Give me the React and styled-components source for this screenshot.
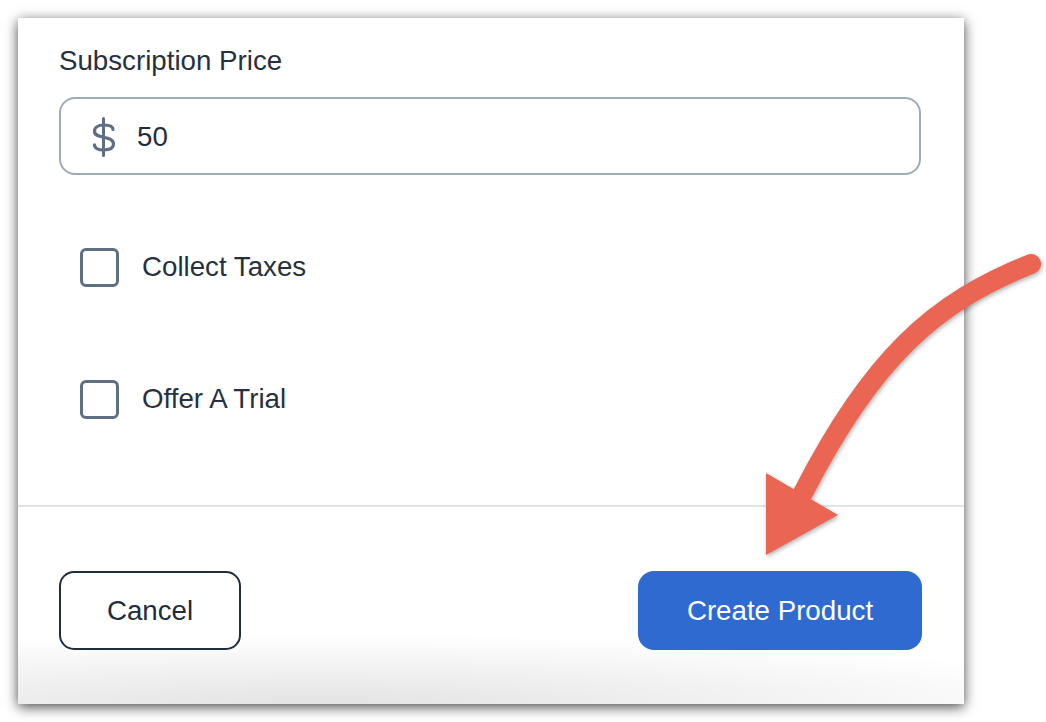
import styled, { createGlobalStyle } from 'styled-components';

const GlobalStyle = createGlobalStyle`
  html, body {
    margin: 0;
    padding: 0;
    background: #ffffff;
  }

  body {
    font-family: "Liberation Sans", Arial, Helvetica, sans-serif;
    color: #1f2d3d;
  }
`;

const options = ['Collect Taxes', 'Offer A Trial'];

const DollarIcon = () => (
  <svg width="24" height="40" viewBox="0 0 24 40" fill="none">
    <line x1="11.5" y1="1.5" x2="11.5" y2="38.5" stroke="#5e6f82" strokeWidth="3" strokeLinecap="round"/>
    <path
      d="M21 12.5 C21 9.5 17.5 8 12 8 C6 8 2.5 10.5 2.5 14.2 C2.5 18.2 6.5 19.2 11.5 20.2 C17 21.2 21.5 22.5 21.5 27 C21.5 31 17.5 33 11.5 33 C6 33 2.5 31 2.5 27.8"
      stroke="#5e6f82"
      strokeWidth="3.2"
      strokeLinecap="round"
      strokeLinejoin="round"
    />
  </svg>
);

const Arrow = () => (
  <ArrowLayer width="1046" height="722" viewBox="0 0 1046 722">
    <path
      d="M1031 264 C935 302, 872 358, 803 493"
      stroke="#eb6553"
      strokeWidth="20"
      strokeLinecap="round"
      fill="none"
    />
    <polygon points="766,473 838,515 766,555" fill="#eb6553"/>
  </ArrowLayer>
);

const App = () => {
  return (
    <Page>
      <GlobalStyle/>
      <Panel>
        <Body>
          <Label>Subscription Price</Label>
          <PriceField>
            <DollarIcon/>
            <PriceValue>50</PriceValue>
          </PriceField>
          <OptionList>
            {options.map((item) => (
              <OptionRow key={item}>
                <Checkbox/>
                <OptionText>{item}</OptionText>
              </OptionRow>
            ))}
          </OptionList>
        </Body>
        <Footer>
          <Button>Cancel</Button>
          <Button primary>Create Product</Button>
        </Footer>
      </Panel>
      <Arrow/>
    </Page>
  );
};

const Page = styled.div`
  position: relative;
  width: 1046px;
  height: 722px;
  padding: 18px 0 0 18px;
  box-sizing: border-box;
  overflow: hidden;
`;

const Panel = styled.div`
  width: 946px;
  height: 686px;
  background: #ffffff;
  box-shadow: 0 3px 12px rgba(0, 0, 0, 0.72);
  display: flex;
  flex-direction: column;
`;

const Body = styled.div`
  padding: 26px 43px 40px 41px;
  border-bottom: 2px solid #e1e5ea;
`;

const Label = styled.div`
  font-size: 27.7px;
  line-height: 33px;
  color: #26313f;
`;

const PriceField = styled.div`
  margin-top: 20px;
  height: 78px;
  box-sizing: border-box;
  border: 2px solid #9eabba;
  border-radius: 16px;
  display: flex;
  align-items: center;
  gap: 21px;
  padding-left: 31px;
  padding-top: 1px;
`;

const PriceValue = styled.span`
  font-size: 27.7px;
  color: #1f2d3d;
`;

const OptionList = styled.div`
  margin-top: 26px;
  display: flex;
  flex-direction: column;
`;

const OptionRow = styled.label`
  height: 132px;
  display: flex;
  align-items: center;
  gap: 23px;
  padding-left: 21px;
`;

const Checkbox = styled.span`
  width: 39px;
  height: 39px;
  box-sizing: border-box;
  border: 3px solid #5e6f82;
  border-radius: 6px;
`;

const OptionText = styled.span`
  font-size: 27.7px;
  color: #26313f;
`;

const Footer = styled.div`
  flex: 1;
  display: flex;
  justify-content: space-between;
  align-items: flex-start;
  padding: 64px 42px 0 41px;
  background: radial-gradient(ellipse 820px 70px at 300px 100%, rgba(0, 0, 0, 0.11), rgba(0, 0, 0, 0) 100%);
`;

const Button = styled.button`
  height: 79px;
  width: ${(p) => (p.primary ? '284px' : '182px')};
  box-sizing: border-box;
  border-radius: ${(p) => (p.primary ? '16px' : '15px')};
  border: ${(p) => (p.primary ? 'none' : '2px solid #1f2d3d')};
  background: ${(p) => (p.primary ? '#2f6ad1' : '#ffffff')};
  color: ${(p) => (p.primary ? '#ffffff' : '#1f2d3d')};
  font-family: "Liberation Sans", Arial, Helvetica, sans-serif;
  font-size: 27.7px;
  padding: 0;
`;

const ArrowLayer = styled.svg`
  position: absolute;
  top: 0;
  left: 0;
  pointer-events: none;
  filter: drop-shadow(1px 2px 2px rgba(0, 0, 0, 0.3));
`;

export default App;
